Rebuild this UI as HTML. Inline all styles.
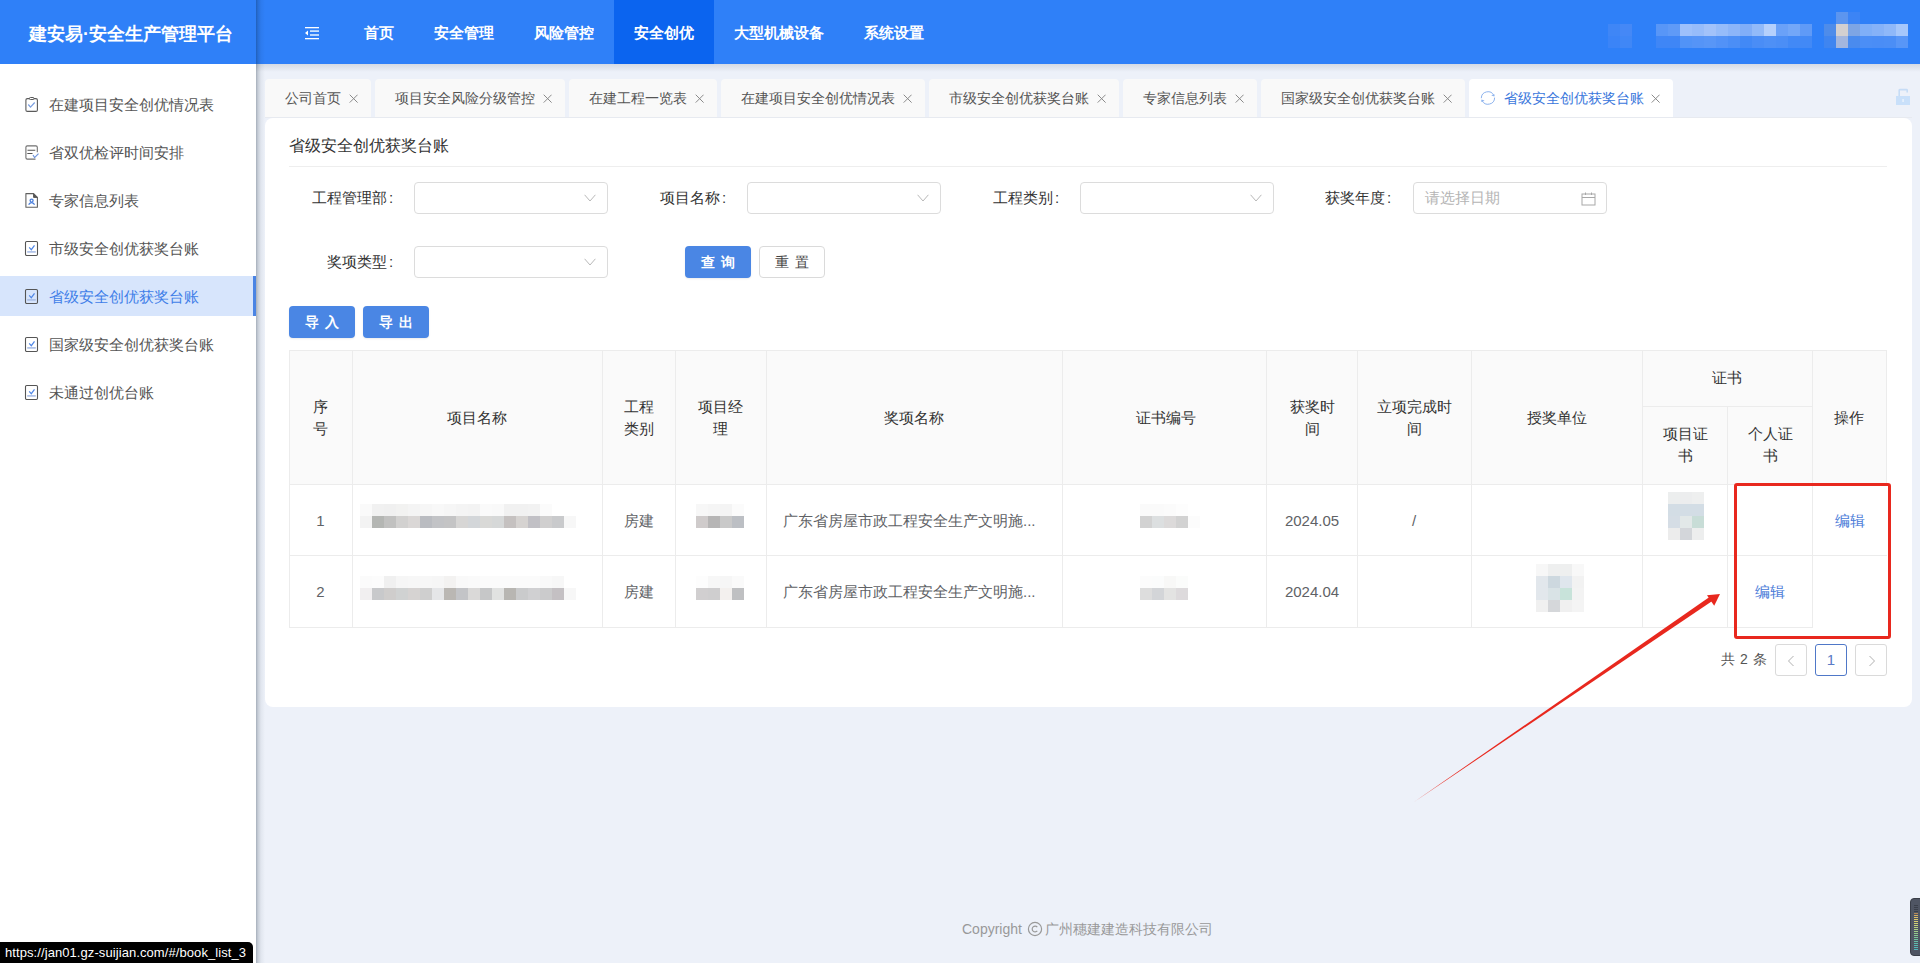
<!DOCTYPE html>
<html><head><meta charset="utf-8">
<style>
*{margin:0;padding:0;box-sizing:border-box;}
html,body{width:1920px;height:963px;overflow:hidden;background:#edf1f9;font-family:"Liberation Sans",sans-serif;}
.a{position:absolute;white-space:nowrap;}
#hdr{position:absolute;left:0;top:0;width:1920px;height:64px;background:#2f80f8;}
#logo{position:absolute;left:3px;top:2px;width:256px;height:64px;color:#fff;font-weight:bold;font-size:18px;line-height:64px;text-align:center;}
.nav{position:absolute;top:0;height:64px;line-height:66px;color:#fff;font-size:15px;font-weight:bold;padding:0 20px;white-space:nowrap;}
.nav.act{background:#0b64ef;}
.blk{position:absolute;}
#side{position:absolute;left:0;top:64px;width:256px;height:899px;background:#fff;}
#sideshadow{position:absolute;left:256px;top:0;width:9px;height:963px;background:linear-gradient(to right,rgba(0,21,41,0.30) 0,rgba(0,21,41,0.16) 2px,rgba(0,21,41,0.05) 5px,rgba(0,21,41,0) 9px);}
#topshadow{position:absolute;left:256px;top:64px;width:1664px;height:8px;background:linear-gradient(to bottom,rgba(0,21,41,0.10),rgba(0,21,41,0));}
.mi{position:absolute;left:0;width:256px;height:40px;line-height:41px;font-size:15px;color:#555;padding-left:49px;white-space:nowrap;}
.mi.act{background:#d7e5fc;color:#3f7ee8;}
.mi.act:after{content:"";position:absolute;right:0;top:0;width:3px;height:40px;background:#4a84e4;}
.mi svg{position:absolute;left:24px;top:12px;}
.tab{position:absolute;top:79px;height:38px;background:#f9f9f9;border-radius:4px 4px 0 0;font-size:14px;color:#555;line-height:38px;padding-left:20px;white-space:nowrap;}
.tab svg{position:absolute;top:15px;right:13px;}
#card{position:absolute;left:265px;top:118px;width:1647px;height:589px;background:#fff;border-radius:8px;}
.lbl{position:absolute;font-size:15px;color:#333;line-height:20px;white-space:nowrap;}
.sel{position:absolute;width:194px;height:32px;border:1px solid #dcdcdc;border-radius:4px;background:#fff;}
.sel svg{position:absolute;right:11px;top:11px;}
.btn{position:absolute;word-spacing:2px;height:32px;border-radius:4px;background:#4a86e4;color:#fff;font-size:14px;font-weight:bold;line-height:32px;text-align:center;box-shadow:0 1px 2px rgba(0,0,0,0.08);}
.btn2{position:absolute;word-spacing:2px;height:32px;border-radius:4px;background:#fff;border:1px solid #dadada;color:#444;font-size:14px;font-weight:500;line-height:30px;text-align:center;}
.hl{position:absolute;height:1px;background:#ececec;}
.vl{position:absolute;width:1px;background:#ececec;}
.th{position:absolute;font-size:15px;color:#333;font-weight:500;line-height:22px;text-align:center;white-space:nowrap;}
.td{position:absolute;font-size:15px;color:#606266;line-height:22px;white-space:nowrap;}
.pg{position:absolute;top:644px;width:32px;height:32px;border:1px solid #dadada;border-radius:3px;background:#fff;}
</style></head><body>
<div id="hdr">
  <div id="logo">建安易·安全生产管理平台</div>
  <svg class="blk" style="left:304px;top:26px" width="16" height="14" viewBox="0 0 16 14">
    <rect x="1" y="1" width="14" height="1.3" fill="#fff"/>
    <rect x="6" y="4.3" width="9" height="1.6" fill="#d8ecff"/>
    <rect x="6" y="8.2" width="9" height="1.6" fill="#d8ecff"/>
    <rect x="1" y="12" width="14" height="1.3" fill="#fff"/>
    <path d="M1 7 L4 4.6 L4 9.4 Z" fill="#fff"/>
  </svg>
  <div class="nav" style="left:344px">首页</div>
  <div class="nav" style="left:414px">安全管理</div>
  <div class="nav" style="left:514px">风险管控</div>
  <div class="nav act" style="left:614px">安全创优</div>
  <div class="nav" style="left:714px">大型机械设备</div>
  <div class="nav" style="left:844px">系统设置</div>
  <!-- blurred user area -->
<div class="blk" style="left:1608px;top:24px;width:12px;height:12px;background:#3f86f6"></div><div class="blk" style="left:1620px;top:24px;width:12px;height:12px;background:#4588f6"></div><div class="blk" style="left:1608px;top:36px;width:12px;height:12px;background:#3b84f7"></div><div class="blk" style="left:1620px;top:36px;width:12px;height:12px;background:#4087f6"></div>
<div class="blk" style="left:1656px;top:24px;width:12px;height:12px;background:#5896f7"></div><div class="blk" style="left:1668px;top:24px;width:12px;height:12px;background:#5f9af7"></div><div class="blk" style="left:1680px;top:24px;width:12px;height:12px;background:#9dc0fb"></div><div class="blk" style="left:1692px;top:24px;width:12px;height:12px;background:#97bcfa"></div><div class="blk" style="left:1704px;top:24px;width:12px;height:12px;background:#a2c2fa"></div><div class="blk" style="left:1716px;top:24px;width:12px;height:12px;background:#96bcfa"></div><div class="blk" style="left:1728px;top:24px;width:12px;height:12px;background:#8cb5f9"></div><div class="blk" style="left:1740px;top:24px;width:12px;height:12px;background:#81aef8"></div><div class="blk" style="left:1752px;top:24px;width:12px;height:12px;background:#92baf9"></div><div class="blk" style="left:1764px;top:24px;width:12px;height:12px;background:#b5d0fc"></div><div class="blk" style="left:1776px;top:24px;width:12px;height:12px;background:#6aa1f8"></div><div class="blk" style="left:1788px;top:24px;width:12px;height:12px;background:#73a7f8"></div><div class="blk" style="left:1800px;top:24px;width:12px;height:12px;background:#5f9af7"></div><div class="blk" style="left:1656px;top:36px;width:12px;height:12px;background:#3f86f6"></div><div class="blk" style="left:1668px;top:36px;width:12px;height:12px;background:#3f86f6"></div><div class="blk" style="left:1680px;top:36px;width:12px;height:12px;background:#5193f7"></div><div class="blk" style="left:1692px;top:36px;width:12px;height:12px;background:#5594f7"></div><div class="blk" style="left:1704px;top:36px;width:12px;height:12px;background:#5896f7"></div><div class="blk" style="left:1716px;top:36px;width:12px;height:12px;background:#5292f7"></div><div class="blk" style="left:1728px;top:36px;width:12px;height:12px;background:#4b8ef6"></div><div class="blk" style="left:1740px;top:36px;width:12px;height:12px;background:#4289f6"></div><div class="blk" style="left:1752px;top:36px;width:12px;height:12px;background:#4a8df6"></div><div class="blk" style="left:1764px;top:36px;width:12px;height:12px;background:#4e90f6"></div><div class="blk" style="left:1776px;top:36px;width:12px;height:12px;background:#4b8ef6"></div><div class="blk" style="left:1788px;top:36px;width:12px;height:12px;background:#4289f6"></div><div class="blk" style="left:1800px;top:36px;width:12px;height:12px;background:#4289f6"></div>
<div class="blk" style="left:1836px;top:12px;width:12px;height:12px;background:#5c95ef"></div><div class="blk" style="left:1848px;top:12px;width:12px;height:12px;background:#3c84f5"></div><div class="blk" style="left:1824px;top:24px;width:12px;height:12px;background:#4e8cea"></div><div class="blk" style="left:1836px;top:24px;width:12px;height:12px;background:#d4d0d0"></div><div class="blk" style="left:1848px;top:24px;width:12px;height:12px;background:#7ea5e4"></div><div class="blk" style="left:1860px;top:24px;width:12px;height:12px;background:#7faff8"></div><div class="blk" style="left:1872px;top:24px;width:12px;height:12px;background:#86b2f8"></div><div class="blk" style="left:1884px;top:24px;width:12px;height:12px;background:#8fb8f9"></div><div class="blk" style="left:1896px;top:24px;width:12px;height:12px;background:#a6c7fb"></div><div class="blk" style="left:1824px;top:36px;width:12px;height:12px;background:#3f85f0"></div><div class="blk" style="left:1836px;top:36px;width:12px;height:12px;background:#a3b6de"></div><div class="blk" style="left:1848px;top:36px;width:12px;height:12px;background:#4a8bee"></div><div class="blk" style="left:1860px;top:36px;width:12px;height:12px;background:#4b8ef6"></div><div class="blk" style="left:1872px;top:36px;width:12px;height:12px;background:#4a8df6"></div><div class="blk" style="left:1884px;top:36px;width:12px;height:12px;background:#4b8ef6"></div><div class="blk" style="left:1896px;top:36px;width:12px;height:12px;background:#5896f7"></div>
</div>
<div id="side">
  <div class="mi" style="top:20px"><svg width="16" height="18" viewBox="0 0 16 18"><rect x="1.9" y="2.6" width="11.5" height="12.8" rx="1.5" fill="none" stroke="#5a5a5a" stroke-width="1.1"/><rect x="5.4" y="1.5" width="4.6" height="2" rx="1" fill="#fff" stroke="#5a5a5a" stroke-width="1"/><path d="M4.3 8.5 L6.5 11.2 L10.7 6.5" fill="none" stroke="#7a9ee0" stroke-width="1.2"/></svg>在建项目安全创优情况表</div>
  <div class="mi" style="top:68px"><svg width="16" height="18" viewBox="0 0 16 18"><path d="M13.3 8.2 V3.3 Q13.3 1.9 11.9 1.9 H3.3 Q1.9 1.9 1.9 3.3 V13.8 Q1.9 15.1 3.3 15.1 H11.5" fill="none" stroke="#707070" stroke-width="1.1"/><path d="M3.5 6.3 H11.3 M3.3 9.5 H8.5" stroke="#555" stroke-width="1.1"/><path d="M9 11 L10.6 13.6 L14.5 9.6" fill="none" stroke="#6f95dc" stroke-width="1.2"/></svg>省双优检评时间安排</div>
  <div class="mi" style="top:116px"><svg width="16" height="18" viewBox="0 0 16 18"><path d="M1.9 1.6 H9.6 L13.4 5.4 V15.2 H1.9 Z" fill="none" stroke="#606060" stroke-width="1.1" stroke-linejoin="round"/><path d="M9.6 1.6 V5.4 H13.4" fill="#555" stroke="#555" stroke-width="1"/><circle cx="7.6" cy="8.6" r="1.5" fill="none" stroke="#4a7fdc" stroke-width="1.3"/><path d="M4.6 12.6 Q7.6 8.8 10.6 12.6" fill="none" stroke="#4a7fdc" stroke-width="1.3"/></svg>专家信息列表</div>
  <div class="mi" style="top:164px"><svg width="16" height="18" viewBox="0 0 16 18"><rect x="1.5" y="1.5" width="12" height="14" rx="1.2" fill="none" stroke="#555" stroke-width="1.1"/><path d="M5.2 7.4 L7.3 9.7 L10.5 5.4" fill="none" stroke="#4f86e6" stroke-width="1.2"/><rect x="3.2" y="11.1" width="8.6" height="1.6" fill="#a9bde6"/></svg>市级安全创优获奖台账</div>
  <div class="mi act" style="top:212px"><svg width="16" height="18" viewBox="0 0 16 18"><rect x="1.5" y="1.5" width="12" height="14" rx="1.2" fill="none" stroke="#555" stroke-width="1.1"/><path d="M5.2 7.4 L7.3 9.7 L10.5 5.4" fill="none" stroke="#4f86e6" stroke-width="1.2"/><rect x="3.2" y="11.1" width="8.6" height="1.6" fill="#a9bde6"/></svg>省级安全创优获奖台账</div>
  <div class="mi" style="top:260px"><svg width="16" height="18" viewBox="0 0 16 18"><rect x="1.5" y="1.5" width="12" height="14" rx="1.2" fill="none" stroke="#555" stroke-width="1.1"/><path d="M5.2 7.4 L7.3 9.7 L10.5 5.4" fill="none" stroke="#4f86e6" stroke-width="1.2"/><rect x="3.2" y="11.1" width="8.6" height="1.6" fill="#a9bde6"/></svg>国家级安全创优获奖台账</div>
  <div class="mi" style="top:308px"><svg width="16" height="18" viewBox="0 0 16 18"><rect x="1.5" y="1.5" width="12" height="14" rx="1.2" fill="none" stroke="#555" stroke-width="1.1"/><path d="M5.2 7.4 L7.3 9.7 L10.5 5.4" fill="none" stroke="#4f86e6" stroke-width="1.2"/><rect x="3.2" y="11.1" width="8.6" height="1.6" fill="#a9bde6"/></svg>未通过创优台账</div>
</div>
<div id="sideshadow"></div>
<div id="topshadow"></div>
<div class="blk" style="left:265px;top:117px;width:1647px;height:1px;background:#e7eaf0"></div>
<div id="tabs">
<div class="tab" style="left:265px;width:106px">公司首页<svg width="9" height="9" viewBox="0 0 9 9"><path d="M0.7 0.7 L8.6 8.6 M8.6 0.7 L0.7 8.6" stroke="#8a8a8a" stroke-width="1"/></svg></div>
<div class="tab" style="left:375px;width:190px">项目安全风险分级管控<svg width="9" height="9" viewBox="0 0 9 9"><path d="M0.7 0.7 L8.6 8.6 M8.6 0.7 L0.7 8.6" stroke="#8a8a8a" stroke-width="1"/></svg></div>
<div class="tab" style="left:569px;width:148px">在建工程一览表<svg width="9" height="9" viewBox="0 0 9 9"><path d="M0.7 0.7 L8.6 8.6 M8.6 0.7 L0.7 8.6" stroke="#8a8a8a" stroke-width="1"/></svg></div>
<div class="tab" style="left:721px;width:204px">在建项目安全创优情况表<svg width="9" height="9" viewBox="0 0 9 9"><path d="M0.7 0.7 L8.6 8.6 M8.6 0.7 L0.7 8.6" stroke="#8a8a8a" stroke-width="1"/></svg></div>
<div class="tab" style="left:929px;width:190px">市级安全创优获奖台账<svg width="9" height="9" viewBox="0 0 9 9"><path d="M0.7 0.7 L8.6 8.6 M8.6 0.7 L0.7 8.6" stroke="#8a8a8a" stroke-width="1"/></svg></div>
<div class="tab" style="left:1123px;width:134px">专家信息列表<svg width="9" height="9" viewBox="0 0 9 9"><path d="M0.7 0.7 L8.6 8.6 M8.6 0.7 L0.7 8.6" stroke="#8a8a8a" stroke-width="1"/></svg></div>
<div class="tab" style="left:1261px;width:204px">国家级安全创优获奖台账<svg width="9" height="9" viewBox="0 0 9 9"><path d="M0.7 0.7 L8.6 8.6 M8.6 0.7 L0.7 8.6" stroke="#8a8a8a" stroke-width="1"/></svg></div>
<div class="tab" style="left:1469px;width:204px;background:#fff;color:#3a77dc;padding-left:35px"><svg style="position:absolute;left:11px;top:11px" width="16" height="16" viewBox="0 0 16 16"><path d="M1.3 8.2 A6.6 6.6 0 0 1 13.9 5.6" fill="none" stroke="#8db3ee" stroke-width="1"/><path d="M11.2 5.6 L14.5 4.2 L14.4 6.6 Z" fill="#8db3ee"/><path d="M14.6 7.6 A6.6 6.6 0 0 1 2.1 10.6" fill="none" stroke="#8db3ee" stroke-width="1"/><path d="M4.6 10.6 L1.3 12 L1.4 9.6 Z" fill="#8db3ee"/></svg>省级安全创优获奖台账<svg width="9" height="9" viewBox="0 0 9 9"><path d="M0.7 0.7 L8.6 8.6 M8.6 0.7 L0.7 8.6" stroke="#8a8a8a" stroke-width="1"/></svg></div>
<svg class="blk" style="left:1895px;top:88px" width="16" height="18" viewBox="0 0 16 18"><path d="M4.2 8.5 V2.2 Q4.2 1.6 4.8 1.6 H11.6 Q12.2 1.6 12.2 2.2 V4.6" fill="none" stroke="#c6dcf6" stroke-width="1.6"/><rect x="1" y="8" width="14" height="9" fill="#c9e0fa"/><rect x="7.2" y="11" width="1.8" height="3" fill="#e4effc"/></svg>
</div>
<div id="card"></div>
<div class="a" style="left:289px;top:135px;font-size:16px;line-height:22px;color:#333">省级安全创优获奖台账</div>
<div class="hl" style="left:289px;top:166px;width:1598px;background:#eeeeee"></div>
<div class="lbl" style="left:312px;top:188px">工程管理部<span style="margin-left:2px">:</span></div>
<div class="sel" style="left:414px;top:182px"><svg width="12" height="8" viewBox="0 0 12 8"><path d="M0.6 0.8 L6 7 L11.4 0.8" fill="none" stroke="#b8b8b8" stroke-width="1"/></svg></div>
<div class="lbl" style="left:660px;top:188px">项目名称<span style="margin-left:2px">:</span></div>
<div class="sel" style="left:747px;top:182px"><svg width="12" height="8" viewBox="0 0 12 8"><path d="M0.6 0.8 L6 7 L11.4 0.8" fill="none" stroke="#b8b8b8" stroke-width="1"/></svg></div>
<div class="lbl" style="left:993px;top:188px">工程类别<span style="margin-left:2px">:</span></div>
<div class="sel" style="left:1080px;top:182px"><svg width="12" height="8" viewBox="0 0 12 8"><path d="M0.6 0.8 L6 7 L11.4 0.8" fill="none" stroke="#b8b8b8" stroke-width="1"/></svg></div>
<div class="lbl" style="left:1325px;top:188px">获奖年度<span style="margin-left:2px">:</span></div>
<div class="sel" style="left:1413px;top:182px"><span class="a" style="left:11px;top:5px;font-size:15px;line-height:20px;color:#b5b5b5">请选择日期</span><svg style="position:absolute;left:167px;top:9px" width="15" height="14" viewBox="0 0 15 14"><rect x="1" y="2" width="13" height="11" fill="none" stroke="#a8a8a8" stroke-width="1"/><path d="M1 5.5 H14 M4.5 0.5 V3 M10.5 0.5 V3" stroke="#a8a8a8" stroke-width="1"/></svg></div>
<div class="lbl" style="left:327px;top:252px">奖项类型<span style="margin-left:2px">:</span></div>
<div class="sel" style="left:414px;top:246px"><svg width="12" height="8" viewBox="0 0 12 8"><path d="M0.6 0.8 L6 7 L11.4 0.8" fill="none" stroke="#b8b8b8" stroke-width="1"/></svg></div>
<div class="btn" style="left:685px;top:246px;width:66px">查 询</div>
<div class="btn2" style="left:759px;top:246px;width:66px">重 置</div>
<div class="btn" style="left:289px;top:306px;width:66px">导 入</div>
<div class="btn" style="left:363px;top:306px;width:66px">导 出</div>
<div class="blk" style="left:289px;top:350px;width:1598px;height:134px;background:#fafafa;border-radius:4px 4px 0 0"></div>
<div class="hl" style="left:289px;top:350px;width:1598px"></div>
<div class="hl" style="left:1642px;top:406px;width:170px"></div>
<div class="hl" style="left:289px;top:484px;width:1598px"></div>
<div class="hl" style="left:289px;top:555px;width:1598px"></div>
<div class="hl" style="left:289px;top:627px;width:1524px"></div>
<div class="vl" style="left:289px;top:350px;height:277px"></div>
<div class="vl" style="left:352px;top:350px;height:277px"></div>
<div class="vl" style="left:602px;top:350px;height:277px"></div>
<div class="vl" style="left:675px;top:350px;height:277px"></div>
<div class="vl" style="left:766px;top:350px;height:277px"></div>
<div class="vl" style="left:1062px;top:350px;height:277px"></div>
<div class="vl" style="left:1266px;top:350px;height:277px"></div>
<div class="vl" style="left:1357px;top:350px;height:277px"></div>
<div class="vl" style="left:1471px;top:350px;height:277px"></div>
<div class="vl" style="left:1642px;top:350px;height:277px"></div>
<div class="vl" style="left:1727px;top:406px;height:221px"></div>
<div class="vl" style="left:1812px;top:350px;height:277px"></div>
<div class="vl" style="left:1886px;top:350px;height:134px"></div>
<div class="th" style="left:260.5px;width:120px;top:395.5px">序<br>号</div>
<div class="th" style="left:417px;width:120px;top:406.5px">项目名称</div>
<div class="th" style="left:578.5px;width:120px;top:395.5px">工程<br>类别</div>
<div class="th" style="left:660.5px;width:120px;top:395.5px">项目经<br>理</div>
<div class="th" style="left:854px;width:120px;top:406.5px">奖项名称</div>
<div class="th" style="left:1105.5px;width:120px;top:406.5px">证书编号</div>
<div class="th" style="left:1252px;width:120px;top:395.5px">获奖时<br>间</div>
<div class="th" style="left:1354px;width:120px;top:395.5px">立项完成时<br>间</div>
<div class="th" style="left:1496.5px;width:120px;top:406.5px">授奖单位</div>
<div class="th" style="left:1667px;width:120px;top:367.0px">证书</div>
<div class="th" style="left:1625px;width:120px;top:423.0px">项目证<br>书</div>
<div class="th" style="left:1710px;width:120px;top:423.0px">个人证<br>书</div>
<div class="th" style="left:1789px;width:120px;top:406.5px">操作</div>
<div class="td" style="left:260.5px;width:120px;top:509.5px;text-align:center;">1</div>
<div class="td" style="left:578.5px;width:120px;top:509.5px;text-align:center;">房建</div>
<div class="td" style="left:783px;top:509.5px">广东省房屋市政工程安全生产文明施...</div>
<div class="td" style="left:1252px;width:120px;top:509.5px;text-align:center;">2024.05</div>
<div class="td" style="left:1354px;width:120px;top:509.5px;text-align:center;">/</div>
<div class="td" style="left:260.5px;width:120px;top:581px;text-align:center;">2</div>
<div class="td" style="left:578.5px;width:120px;top:581px;text-align:center;">房建</div>
<div class="td" style="left:783px;top:581px">广东省房屋市政工程安全生产文明施...</div>
<div class="td" style="left:1252px;width:120px;top:581px;text-align:center;">2024.04</div>
<div class="td" style="left:1789.5px;width:120px;top:509.5px;text-align:center;color:#4a7bd8">编辑</div>
<div class="td" style="left:1710px;width:120px;top:581px;text-align:center;color:#4a7bd8">编辑</div>

<div class="blk" style="left:360px;top:504px;width:12px;height:12px;background:#fafafa"></div><div class="blk" style="left:372px;top:504px;width:12px;height:12px;background:#f1f1f1"></div><div class="blk" style="left:384px;top:504px;width:12px;height:12px;background:#f0f0f0"></div><div class="blk" style="left:396px;top:504px;width:12px;height:12px;background:#f2f2f1"></div><div class="blk" style="left:408px;top:504px;width:12px;height:12px;background:#f4f4f4"></div><div class="blk" style="left:420px;top:504px;width:12px;height:12px;background:#f6f6f6"></div><div class="blk" style="left:432px;top:504px;width:12px;height:12px;background:#f8f8f8"></div><div class="blk" style="left:444px;top:504px;width:12px;height:12px;background:#f6f6f6"></div><div class="blk" style="left:456px;top:504px;width:12px;height:12px;background:#f4f4f4"></div><div class="blk" style="left:468px;top:504px;width:12px;height:12px;background:#f3f3f3"></div><div class="blk" style="left:480px;top:504px;width:12px;height:12px;background:#fafafa"></div><div class="blk" style="left:492px;top:504px;width:12px;height:12px;background:#f9f9f9"></div><div class="blk" style="left:504px;top:504px;width:12px;height:12px;background:#f1f1f1"></div><div class="blk" style="left:516px;top:504px;width:12px;height:12px;background:#f1f1f1"></div><div class="blk" style="left:528px;top:504px;width:12px;height:12px;background:#f2f2f2"></div><div class="blk" style="left:540px;top:504px;width:12px;height:12px;background:#fbfbfb"></div><div class="blk" style="left:360px;top:516px;width:12px;height:12px;background:#f3f3f3"></div><div class="blk" style="left:372px;top:516px;width:12px;height:12px;background:#b4b6b3"></div><div class="blk" style="left:384px;top:516px;width:12px;height:12px;background:#c1c1c0"></div><div class="blk" style="left:396px;top:516px;width:12px;height:12px;background:#d2d1d0"></div><div class="blk" style="left:408px;top:516px;width:12px;height:12px;background:#dad7d6"></div><div class="blk" style="left:420px;top:516px;width:12px;height:12px;background:#babcc1"></div><div class="blk" style="left:432px;top:516px;width:12px;height:12px;background:#c2c3c6"></div><div class="blk" style="left:444px;top:516px;width:12px;height:12px;background:#c4c4c5"></div><div class="blk" style="left:456px;top:516px;width:12px;height:12px;background:#d7d6d5"></div><div class="blk" style="left:468px;top:516px;width:12px;height:12px;background:#d3d6d9"></div><div class="blk" style="left:480px;top:516px;width:12px;height:12px;background:#d9d9d7"></div><div class="blk" style="left:492px;top:516px;width:12px;height:12px;background:#d6d8d8"></div><div class="blk" style="left:504px;top:516px;width:12px;height:12px;background:#c5c1c0"></div><div class="blk" style="left:516px;top:516px;width:12px;height:12px;background:#d6d3d1"></div><div class="blk" style="left:528px;top:516px;width:12px;height:12px;background:#c1c0c5"></div><div class="blk" style="left:540px;top:516px;width:12px;height:12px;background:#d0cfcf"></div><div class="blk" style="left:552px;top:516px;width:12px;height:12px;background:#c9cacc"></div><div class="blk" style="left:564px;top:516px;width:12px;height:12px;background:#f7f7f7"></div>
<div class="blk" style="left:360px;top:576px;width:12px;height:12px;background:#fbfbfb"></div><div class="blk" style="left:372px;top:576px;width:12px;height:12px;background:#fcfcfc"></div><div class="blk" style="left:384px;top:576px;width:12px;height:12px;background:#f0f0f0"></div><div class="blk" style="left:396px;top:576px;width:12px;height:12px;background:#f6f6f6"></div><div class="blk" style="left:408px;top:576px;width:12px;height:12px;background:#f7f7f7"></div><div class="blk" style="left:420px;top:576px;width:12px;height:12px;background:#f7f7f7"></div><div class="blk" style="left:432px;top:576px;width:12px;height:12px;background:#f6f6f6"></div><div class="blk" style="left:444px;top:576px;width:12px;height:12px;background:#f3f2f1"></div><div class="blk" style="left:456px;top:576px;width:12px;height:12px;background:#f9f9f9"></div><div class="blk" style="left:468px;top:576px;width:12px;height:12px;background:#fafafa"></div><div class="blk" style="left:480px;top:576px;width:12px;height:12px;background:#fbfbfb"></div><div class="blk" style="left:492px;top:576px;width:12px;height:12px;background:#fbfbfb"></div><div class="blk" style="left:504px;top:576px;width:12px;height:12px;background:#fbfbfb"></div><div class="blk" style="left:516px;top:576px;width:12px;height:12px;background:#fbfbfb"></div><div class="blk" style="left:528px;top:576px;width:12px;height:12px;background:#fbfbfb"></div><div class="blk" style="left:540px;top:576px;width:12px;height:12px;background:#f9f9f9"></div><div class="blk" style="left:552px;top:576px;width:12px;height:12px;background:#f7f7f7"></div><div class="blk" style="left:360px;top:588px;width:12px;height:12px;background:#f1eff0"></div><div class="blk" style="left:372px;top:588px;width:12px;height:12px;background:#c8c9cb"></div><div class="blk" style="left:384px;top:588px;width:12px;height:12px;background:#cfcdcc"></div><div class="blk" style="left:396px;top:588px;width:12px;height:12px;background:#d0d2d2"></div><div class="blk" style="left:408px;top:588px;width:12px;height:12px;background:#d6d3d2"></div><div class="blk" style="left:420px;top:588px;width:12px;height:12px;background:#cfcfcf"></div><div class="blk" style="left:432px;top:588px;width:12px;height:12px;background:#e5e6e8"></div><div class="blk" style="left:444px;top:588px;width:12px;height:12px;background:#bab7b3"></div><div class="blk" style="left:456px;top:588px;width:12px;height:12px;background:#c3c4c7"></div><div class="blk" style="left:468px;top:588px;width:12px;height:12px;background:#dad9d8"></div><div class="blk" style="left:480px;top:588px;width:12px;height:12px;background:#c6c7c8"></div><div class="blk" style="left:492px;top:588px;width:12px;height:12px;background:#e1e2e1"></div><div class="blk" style="left:504px;top:588px;width:12px;height:12px;background:#b8b6b2"></div><div class="blk" style="left:516px;top:588px;width:12px;height:12px;background:#cacbcc"></div><div class="blk" style="left:528px;top:588px;width:12px;height:12px;background:#d0d0d2"></div><div class="blk" style="left:540px;top:588px;width:12px;height:12px;background:#cbcbcc"></div><div class="blk" style="left:552px;top:588px;width:12px;height:12px;background:#c4c0c3"></div><div class="blk" style="left:564px;top:588px;width:12px;height:12px;background:#f7f7f7"></div>
<div class="blk" style="left:696px;top:504px;width:12px;height:12px;background:#f7f7f7"></div><div class="blk" style="left:708px;top:504px;width:12px;height:12px;background:#f5f5f5"></div><div class="blk" style="left:720px;top:504px;width:12px;height:12px;background:#f4f4f4"></div><div class="blk" style="left:732px;top:504px;width:12px;height:12px;background:#fbfbfb"></div><div class="blk" style="left:696px;top:516px;width:12px;height:12px;background:#cfcbcb"></div><div class="blk" style="left:708px;top:516px;width:12px;height:12px;background:#b6b5b5"></div><div class="blk" style="left:720px;top:516px;width:12px;height:12px;background:#c9c9c9"></div><div class="blk" style="left:732px;top:516px;width:12px;height:12px;background:#bcbfc4"></div>
<div class="blk" style="left:696px;top:576px;width:12px;height:12px;background:#fdfdfd"></div><div class="blk" style="left:708px;top:576px;width:12px;height:12px;background:#f7f7f7"></div><div class="blk" style="left:720px;top:576px;width:12px;height:12px;background:#f6f6f6"></div><div class="blk" style="left:732px;top:576px;width:12px;height:12px;background:#fafafa"></div><div class="blk" style="left:696px;top:588px;width:12px;height:12px;background:#d1cfd0"></div><div class="blk" style="left:708px;top:588px;width:12px;height:12px;background:#cfcecf"></div><div class="blk" style="left:720px;top:588px;width:12px;height:12px;background:#f3f0ee"></div><div class="blk" style="left:732px;top:588px;width:12px;height:12px;background:#bfc0c2"></div>
<div class="blk" style="left:1140px;top:504px;width:12px;height:12px;background:#fafafa"></div><div class="blk" style="left:1152px;top:504px;width:12px;height:12px;background:#fafafa"></div><div class="blk" style="left:1164px;top:504px;width:12px;height:12px;background:#fbfbfb"></div><div class="blk" style="left:1176px;top:504px;width:12px;height:12px;background:#fdfdfd"></div><div class="blk" style="left:1140px;top:516px;width:12px;height:12px;background:#d2d2d2"></div><div class="blk" style="left:1152px;top:516px;width:12px;height:12px;background:#dcdfe0"></div><div class="blk" style="left:1164px;top:516px;width:12px;height:12px;background:#dcdada"></div><div class="blk" style="left:1176px;top:516px;width:12px;height:12px;background:#d2d2d2"></div><div class="blk" style="left:1188px;top:516px;width:12px;height:12px;background:#fcfcfc"></div>
<div class="blk" style="left:1140px;top:576px;width:12px;height:12px;background:#fcfcfc"></div><div class="blk" style="left:1152px;top:576px;width:12px;height:12px;background:#fbfcfc"></div><div class="blk" style="left:1164px;top:576px;width:12px;height:12px;background:#f8f8f7"></div><div class="blk" style="left:1176px;top:576px;width:12px;height:12px;background:#fbfcfb"></div><div class="blk" style="left:1140px;top:588px;width:12px;height:12px;background:#dddddd"></div><div class="blk" style="left:1152px;top:588px;width:12px;height:12px;background:#d3d5d8"></div><div class="blk" style="left:1164px;top:588px;width:12px;height:12px;background:#e3e3e2"></div><div class="blk" style="left:1176px;top:588px;width:12px;height:12px;background:#dddadc"></div>
<div class="blk" style="left:1668px;top:492px;width:12px;height:12px;background:#eceeee"></div><div class="blk" style="left:1680px;top:492px;width:12px;height:12px;background:#ecedee"></div><div class="blk" style="left:1692px;top:492px;width:12px;height:12px;background:#eeefef"></div><div class="blk" style="left:1668px;top:504px;width:12px;height:12px;background:#d3dde5"></div><div class="blk" style="left:1680px;top:504px;width:12px;height:12px;background:#d3dde5"></div><div class="blk" style="left:1692px;top:504px;width:12px;height:12px;background:#d3dde5"></div><div class="blk" style="left:1668px;top:516px;width:12px;height:12px;background:#d5dde5"></div><div class="blk" style="left:1680px;top:516px;width:12px;height:12px;background:#e2e8e8"></div><div class="blk" style="left:1692px;top:516px;width:12px;height:12px;background:#c8ddd7"></div><div class="blk" style="left:1668px;top:528px;width:12px;height:12px;background:#ececec"></div><div class="blk" style="left:1680px;top:528px;width:12px;height:12px;background:#d3d6da"></div><div class="blk" style="left:1692px;top:528px;width:12px;height:12px;background:#edeeee"></div>
<div class="blk" style="left:1536px;top:564px;width:12px;height:12px;background:#f7f7f7"></div><div class="blk" style="left:1548px;top:564px;width:12px;height:12px;background:#eeefef"></div><div class="blk" style="left:1560px;top:564px;width:12px;height:12px;background:#eeefef"></div><div class="blk" style="left:1572px;top:564px;width:12px;height:12px;background:#f8f8f8"></div><div class="blk" style="left:1536px;top:576px;width:12px;height:12px;background:#e2e7ec"></div><div class="blk" style="left:1548px;top:576px;width:12px;height:12px;background:#cdd8df"></div><div class="blk" style="left:1560px;top:576px;width:12px;height:12px;background:#dfe6ed"></div><div class="blk" style="left:1572px;top:576px;width:12px;height:12px;background:#f2f2f2"></div><div class="blk" style="left:1536px;top:588px;width:12px;height:12px;background:#e2e7ec"></div><div class="blk" style="left:1548px;top:588px;width:12px;height:12px;background:#d9e3e6"></div><div class="blk" style="left:1560px;top:588px;width:12px;height:12px;background:#c8e3da"></div><div class="blk" style="left:1572px;top:588px;width:12px;height:12px;background:#f3f3f3"></div><div class="blk" style="left:1536px;top:600px;width:12px;height:12px;background:#f0f0f0"></div><div class="blk" style="left:1548px;top:600px;width:12px;height:12px;background:#d5d7da"></div><div class="blk" style="left:1560px;top:600px;width:12px;height:12px;background:#f0f0f0"></div><div class="blk" style="left:1572px;top:600px;width:12px;height:12px;background:#f4f4f4"></div>
<div class="a" style="left:1721px;top:648px;font-size:14px;line-height:22px;color:#555;word-spacing:1px">共 2 条</div>
<div class="pg" style="left:1775px"><svg style="position:absolute;left:11px;top:10px" width="8" height="12" viewBox="0 0 8 12"><path d="M6.5 1 L1.5 6 L6.5 11" fill="none" stroke="#b0b0b0" stroke-width="1"/></svg></div>
<div class="pg" style="left:1815px;border-color:#4f78c8;color:#5b7bc6;font-size:15px;line-height:30px;text-align:center">1</div>
<div class="pg" style="left:1855px"><svg style="position:absolute;left:12px;top:10px" width="8" height="12" viewBox="0 0 8 12"><path d="M1.5 1 L6.5 6 L1.5 11" fill="none" stroke="#b0b0b0" stroke-width="1"/></svg></div>
<div class="blk" style="left:1734px;top:483px;width:157px;height:156px;border:3px solid #e8281e;border-radius:3px"></div>
<svg class="blk" style="left:0;top:0" width="1920" height="963" viewBox="0 0 1920 963"><polygon points="1414,802 1710.2,596.5 1713.0,600.6" fill="#e8281e"/><polygon points="1720,594 1707,595.2 1714.2,605.8" fill="#e8281e"/></svg>
<div class="a" style="left:962px;top:919px;font-size:14px;line-height:20px;color:#999">Copyright</div>
<svg class="blk" style="left:1027px;top:921px" width="16" height="16" viewBox="0 0 16 16"><circle cx="8" cy="8" r="6.6" fill="none" stroke="#999" stroke-width="1.2"/><path d="M10.3 6.1 A2.9 2.9 0 1 0 10.3 9.9" fill="none" stroke="#999" stroke-width="1.2"/></svg>
<div class="a" style="left:1045px;top:919px;font-size:14px;line-height:20px;color:#999">广州穗建建造科技有限公司</div>
<div class="blk" style="left:0;top:942px;width:253px;height:21px;background:#000;border-radius:0 5px 0 0"></div>
<div class="a" style="left:5px;top:943px;font-size:13px;line-height:19px;color:#fff;letter-spacing:0.08px">https://jan01.gz-suijian.com/#/book_list_3</div>
<div class="blk" style="left:1910px;top:898px;width:14px;height:58px;background:#4f5563;border-radius:4px;border:1px solid #3a3e48"><div class="blk" style="left:3px;top:6px;width:4px;height:1px;background:#3a3f4a"></div><div class="blk" style="left:3px;top:8px;width:4px;height:1px;background:#3a3f4a"></div><div class="blk" style="left:3px;top:10px;width:4px;height:1px;background:#3a3f4a"></div><div class="blk" style="left:3px;top:12px;width:4px;height:1px;background:#3a3f4a"></div><div class="blk" style="left:3px;top:14px;width:4px;height:1px;background:#b98b58"></div><div class="blk" style="left:3px;top:16px;width:4px;height:1px;background:#d8b060"></div><div class="blk" style="left:3px;top:18px;width:4px;height:1px;background:#dcc068"></div><div class="blk" style="left:3px;top:20px;width:4px;height:1px;background:#dcc86c"></div><div class="blk" style="left:3px;top:22px;width:4px;height:1px;background:#d8cf70"></div><div class="blk" style="left:3px;top:24px;width:4px;height:1px;background:#d0d274"></div><div class="blk" style="left:3px;top:26px;width:4px;height:1px;background:#c4d27a"></div><div class="blk" style="left:3px;top:28px;width:4px;height:1px;background:#b8d07e"></div><div class="blk" style="left:3px;top:30px;width:4px;height:1px;background:#acd084"></div><div class="blk" style="left:3px;top:32px;width:4px;height:1px;background:#a0cd88"></div><div class="blk" style="left:3px;top:34px;width:4px;height:1px;background:#94ca8c"></div><div class="blk" style="left:3px;top:36px;width:4px;height:1px;background:#88c792"></div><div class="blk" style="left:3px;top:38px;width:4px;height:1px;background:#7cc498"></div><div class="blk" style="left:3px;top:40px;width:4px;height:1px;background:#70c19e"></div><div class="blk" style="left:3px;top:42px;width:4px;height:1px;background:#66bea6"></div><div class="blk" style="left:3px;top:44px;width:4px;height:1px;background:#5ebcac"></div><div class="blk" style="left:3px;top:46px;width:4px;height:1px;background:#58b9b2"></div><div class="blk" style="left:3px;top:48px;width:4px;height:1px;background:#54b6b6"></div><div class="blk" style="left:3px;top:50px;width:4px;height:1px;background:#50b4ba"></div></div>
</body></html>
